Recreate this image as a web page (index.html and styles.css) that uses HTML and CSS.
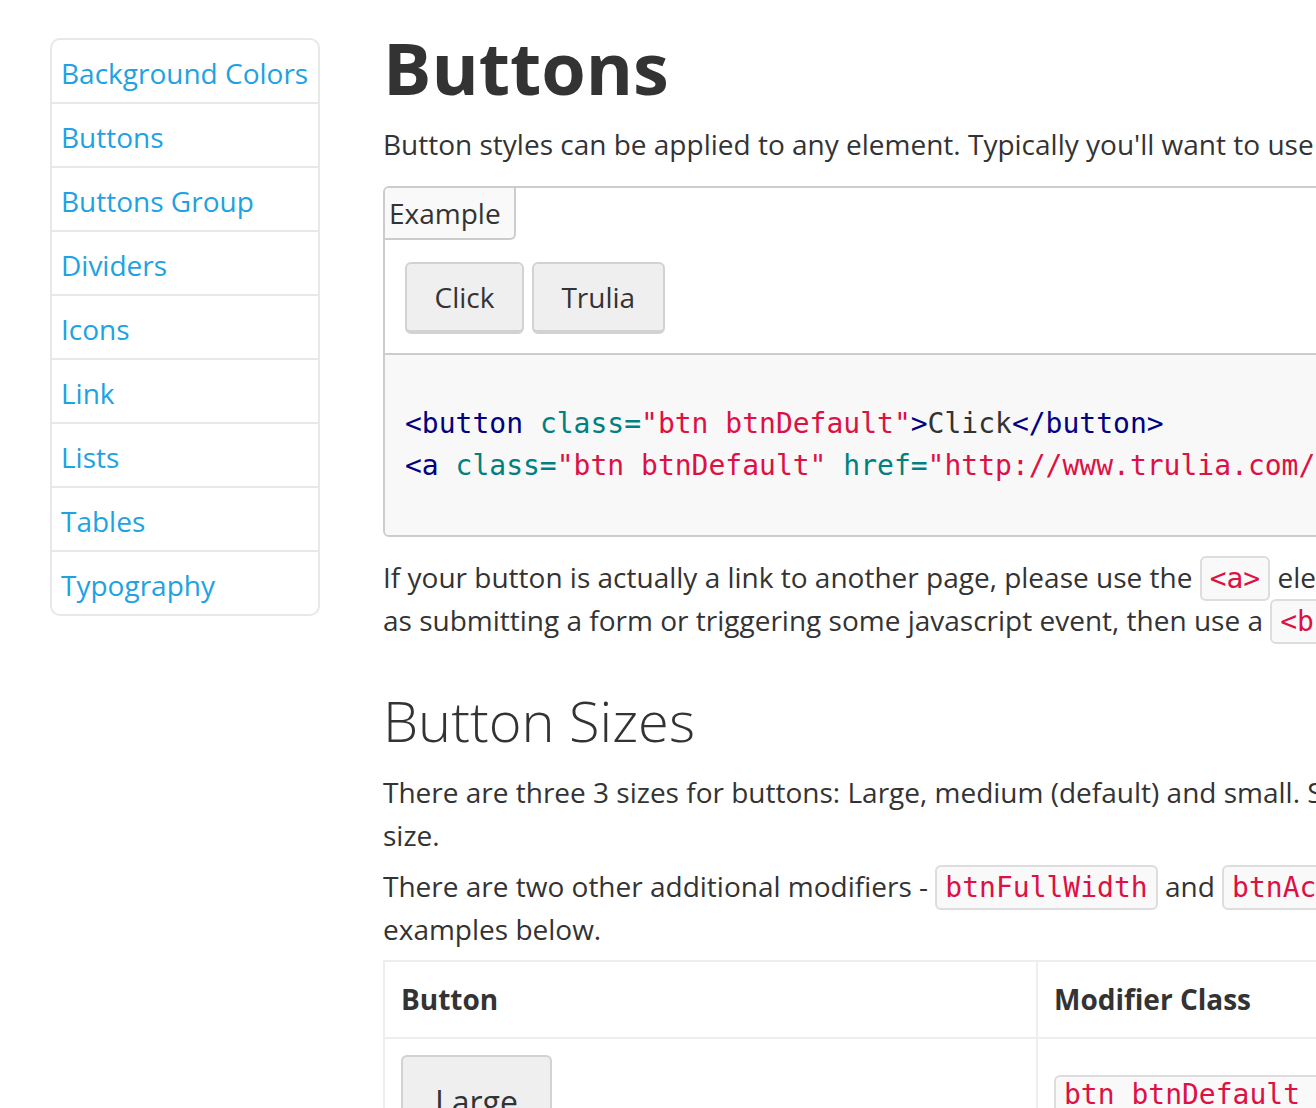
FILE: index.html
```html
<!DOCTYPE html>
<html>
<head>
<meta charset="utf-8">
<title>Buttons</title>
<link rel="stylesheet" href="styles.css">
</head>
<body>
<div class="page">
  <nav class="sidebar">
    <a href="#">Background Colors</a>
    <a href="#">Buttons</a>
    <a href="#">Buttons Group</a>
    <a href="#">Dividers</a>
    <a href="#">Icons</a>
    <a href="#">Link</a>
    <a href="#">Lists</a>
    <a href="#">Tables</a>
    <a href="#">Typography</a>
  </nav>
  <main class="content">
    <h1 class="title">Buttons</h1>
    <p class="text lead">Button styles can be applied to any element. Typically you'll want to use either <code class="inline">&lt;button&gt;</code> or <code class="inline">&lt;a&gt;</code>.</p>
    <div class="example">
      <div class="example-tab">Example</div>
      <div class="example-body">
        <button class="btn">Click</button>
        <a class="btn" href="#">Trulia</a>
      </div>
      <pre class="code"><span class="tag">&lt;button</span> <span class="attr">class=</span><span class="str">"btn btnDefault"</span><span class="tag">&gt;</span>Click<span class="tag">&lt;/button&gt;</span>
<span class="tag">&lt;a</span> <span class="attr">class=</span><span class="str">"btn btnDefault"</span> <span class="attr">href=</span><span class="str">"http://www.trulia.com/"</span><span class="tag">&gt;</span>Trulia<span class="tag">&lt;/a&gt;</span></pre>
    </div>
    <p class="text after-example">If your button is actually a link to another page, please use the <code class="inline">&lt;a&gt;</code> element. If your button performs an action, such as submitting a form or triggering some javascript event, then use a <code class="inline">&lt;button&gt;</code> element.</p>
    <h2 class="subtitle">Button Sizes</h2>
    <p class="text">There are three 3 sizes for buttons: Large, medium (default) and small. Simply add the modifier class to change the size.</p>
    <p class="text">There are two other additional modifiers - <code class="inline">btnFullWidth</code> and <code class="inline">btnAction</code> that can be combined, please see the examples below.</p>
    <table class="table">
      <thead>
        <tr><th class="col-btn">Button</th><th class="col-mod">Modifier Class</th></tr>
      </thead>
      <tbody>
        <tr>
          <td><button class="btn btnLg">Large</button></td>
          <td><code class="inline">btn btnDefault btnLg</code></td>
        </tr>
      </tbody>
    </table>
  </main>
</div>
</body>
</html>
```

FILE: styles.css
```css
html, body {
  margin: 0;
  padding: 0;
  overflow: hidden;
  background: #fff;
}
body {
  font-family: "Open Sans", "Liberation Sans", sans-serif;
  color: #333;
  font-size: 28px;
  line-height: 43px;
}
.page {
  display: flex;
  align-items: flex-start;
  padding: 27px 0 0 50px;
  gap: 63px;
}
.sidebar {
  flex: 0 0 270px;
  box-sizing: border-box;
  margin-top: 11px;
  border: 2px solid #e8e8e8;
  border-radius: 10px;
  display: flex;
  flex-direction: column;
}
.sidebar a {
  display: block;
  height: 60px;
  line-height: 62px;
  padding: 2px 9px 0;
  font-size: 28px;
  color: #1ea2e1;
  text-decoration: none;
  border-bottom: 2px solid #e8e8e8;
  white-space: nowrap;
}
.sidebar a:last-child {
  border-bottom: none;
}
.content {
  flex: 0 0 1530px;
  width: 1530px;
}
.title {
  margin: 0;
  font-size: 72px;
  line-height: 80px;
  font-weight: 700;
}
.text {
  margin: 0 0 8px;
}
.lead {
  margin-top: 16px;
  margin-bottom: 20px;
}
.after-example {
  margin-top: 19px;
}
.inline {
  font-family: "DejaVu Sans Mono", "Liberation Mono", monospace;
  font-size: 28px;
  line-height: 1;
  color: #dd1144;
  background: #f9f9f9;
  border: 2px solid #dddddd;
  border-radius: 6px;
  padding: 4px 8px;
}
.example {
  border: 2px solid #cccccc;
  border-radius: 6px;
  overflow: hidden;
}
.example-tab {
  display: inline-block;
  height: 50px;
  line-height: 50px;
  padding: 0 13px 0 4px;
  font-size: 28px;
  background: #f9f9f9;
  border-right: 2px solid #cccccc;
  border-bottom: 2px solid #cccccc;
  border-bottom-right-radius: 6px;
  vertical-align: top;
}
.example-body {
  padding: 22px 20px 19px;
  display: flex;
  gap: 8px;
  border-bottom: 2px solid #cccccc;
}
.btn {
  display: inline-block;
  box-sizing: border-box;
  height: 72px;
  padding: 0 27.5px;
  font-family: "Open Sans", "Liberation Sans", sans-serif;
  font-size: 28px;
  line-height: 66px;
  color: #333;
  background: #efefef;
  border: 2px solid #d2d2d2;
  border-bottom-width: 4px;
  border-radius: 6px;
  text-decoration: none;
  cursor: pointer;
}
.btnLg {
  height: 96px;
  line-height: 90px;
  padding: 0 32px;
  font-size: 32px;
}
.code {
  margin: 0;
  padding: 48px 20px;
  background: #f8f8f8;
  font-family: "DejaVu Sans Mono", "Liberation Mono", monospace;
  font-size: 28px;
  line-height: 42px;
  color: #333;
}
.tag { color: #000080; }
.attr { color: #008080; }
.str { color: #dd1144; }
.subtitle {
  margin: 47px 0 0;
  font-size: 56px;
  line-height: 62px;
  font-weight: 300;
}
.subtitle + .text {
  margin-top: 20px;
}
.table {
  border-collapse: collapse;
  border: 2px solid #eeeeee;
  width: 1530px;
  margin-top: 9px;
}
.table th,
.table td {
  text-align: left;
  vertical-align: top;
  padding: 16px;
  border: 2px solid #eeeeee;
}
.table th {
  font-weight: 700;
}
.col-btn {
  width: 619px;
}
.table td .inline {
  display: inline-block;
  margin-top: 20px;
}
```
